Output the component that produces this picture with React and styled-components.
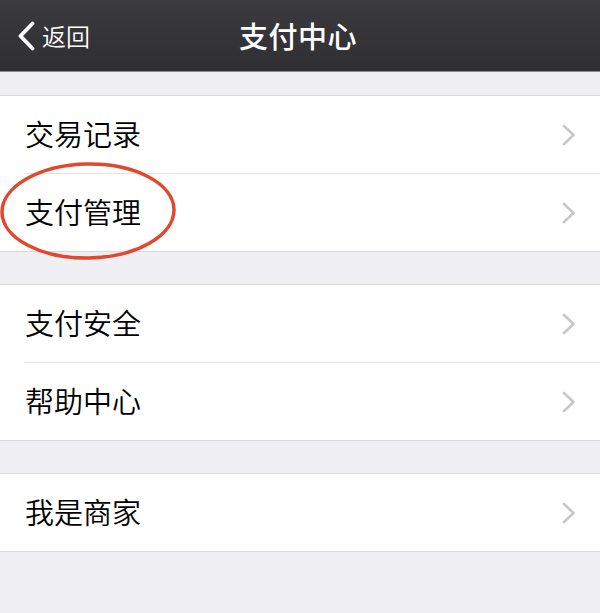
import React from 'react';
import styled, { createGlobalStyle } from 'styled-components';

const GlobalStyle = createGlobalStyle`
  html, body {
    margin: 0;
    padding: 0;
    background: #efeff4;
  }
  body {
    font-family: "Noto Sans CJK SC", "Noto Sans", sans-serif;
  }
`;

const Page = styled.div`
  position: relative;
  width: 600px;
  min-height: 613px;
  background: #efeff4;
  overflow: hidden;
`;

const NavBar = styled.div`
  position: relative;
  height: 71px;
  display: flex;
  align-items: center;
  justify-content: center;
  background: linear-gradient(#3b3a3f, #2f2e32);
  border-bottom: 1px solid #8a8a8f;
`;

const BackButton = styled.div`
  position: absolute;
  left: 17px;
  top: 0;
  bottom: 0;
  display: flex;
  align-items: center;
  gap: 6px;
  color: #fff;
  font-size: 24px;
  font-weight: 350;
`;

const Title = styled.div`
  color: #fff;
  font-size: 29px;
  font-weight: 500;
  letter-spacing: 0.5px;
  margin-left: -4px;
  margin-top: -2px;
`;

const Content = styled.div`
  padding-top: 23px;
  padding-bottom: 61px;
  display: flex;
  flex-direction: column;
  gap: 32px;
`;

const Group = styled.div`
  background: #fff;
  border-top: 1px solid #dadade;
  border-bottom: 1px solid #dadade;
`;

const Row = styled.div`
  padding-left: 24px;

  & + & > div {
    border-top: 1px solid #e3e3e6;
  }
`;

const RowInner = styled.div`
  height: 77px;
  display: flex;
  align-items: center;
  justify-content: space-between;
  padding-right: 24px;
`;

const Label = styled.span`
  font-size: 29px;
  font-weight: 350;
  color: #000;
  margin-left: 1px;
  margin-top: -3px;
`;

const Annotation = styled.svg`
  position: absolute;
  left: 0;
  top: 160px;
  pointer-events: none;
`;

const Chevron = () => (
  <svg width="14" height="22" viewBox="0 0 14 22">
    <path d="M2 2 L11.5 11 L2 20" fill="none" stroke="#c7c7cc" strokeWidth="2.6" strokeLinecap="round" strokeLinejoin="round" />
  </svg>
);

const BackArrow = () => (
  <svg width="19" height="30" viewBox="0 0 19 30">
    <path d="M15.5 2.5 L3.5 15 L15.5 27.5" fill="none" stroke="#fff" strokeWidth="3.8" strokeLinecap="round" strokeLinejoin="round" />
  </svg>
);

const groups = [
  ['交易记录', '支付管理'],
  ['支付安全', '帮助中心'],
  ['我是商家'],
];

export default function App() {
  return (
    <Page>
      <GlobalStyle />
      <NavBar>
        <BackButton>
          <BackArrow />
          <span>返回</span>
        </BackButton>
        <Title>支付中心</Title>
      </NavBar>
      <Content>
        {groups.map((items, i) => (
          <Group key={i}>
            {items.map((item) => (
              <Row key={item}>
                <RowInner>
                  <Label>{item}</Label>
                  <Chevron />
                </RowInner>
              </Row>
            ))}
          </Group>
        ))}
      </Content>
      <Annotation width="180" height="104" viewBox="0 0 180 104">
        <ellipse cx="88" cy="51" rx="86" ry="47" fill="none" stroke="#e2482c" strokeWidth="3.5" transform="rotate(-1 88 51)" />
      </Annotation>
    </Page>
  );
}
